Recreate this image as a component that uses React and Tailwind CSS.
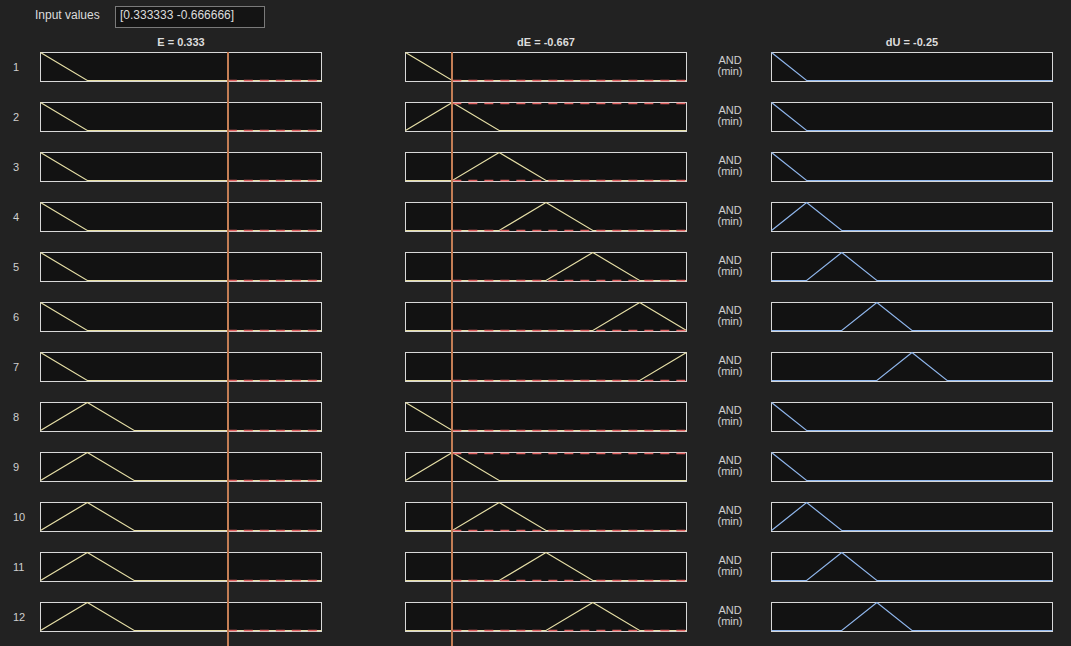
import React from 'react';

const W = 282;
const H = 30;

// x position inside a plot for a value in [-1, 1]
const px = (v) => ((v + 1) / 2) * (W - 1) + 0.5;
const py = (m) => 0.5 + (1 - m) * 28;

function triPoints(c, h) {
  const pts = [];
  const f = (v) => Math.max(0, 1 - Math.abs(v - c) / h);
  const xs = [-1, c - h, c, c + h, 1].filter((v) => v >= -1 && v <= 1);
  xs.sort((a, b) => a - b);
  xs.forEach((v) => pts.push([v, f(v)]));
  return pts;
}

function Plot({ points, color, input }) {
  const poly = points.map(([v, m]) => `${px(v)},${py(m)}`).join(' ');
  let level = null;
  if (input !== undefined) {
    for (let i = 0; i < points.length - 1; i++) {
      const [a, ma] = points[i];
      const [b, mb] = points[i + 1];
      if (input >= a && input <= b) {
        level = b === a ? ma : ma + ((input - a) / (b - a)) * (mb - ma);
        break;
      }
    }
  }
  return (
    <svg width={W} height={H} className="block">
      <rect x="0.5" y="0.5" width={W - 1} height={H - 1} fill="#121212" stroke="#d8d8d8" strokeWidth="1" />
      <polyline points={poly} fill="none" stroke={color} strokeWidth="1.2" />
      {level !== null && (
        <line
          x1={px(input)}
          x2={W - 1}
          y1={level > 0.5 ? 1.5 : 28.5}
          y2={level > 0.5 ? 1.5 : 28.5}
          stroke="#e06060"
          strokeWidth="1.6"
          strokeDasharray="9 7"
        />
      )}
    </svg>
  );
}

const third = 1 / 3;
const eRows = [0, 0, 0, 0, 0, 0, 0, 1, 1, 1, 1, 1];
const dERows = [0, 1, 2, 3, 4, 5, 6, 0, 1, 2, 3, 4];
const dURows = [-1, -1, -1, -0.75, -0.5, -0.25, 0, -1, -1, -0.75, -0.5, -0.25];

const E = 0.333333;
const DE = -0.666666;

function InputColumn({ title, rows, input, lineLeft }) {
  return (
    <div className="w-[282px] flex flex-col">
      <div className="h-4 text-[11px] leading-[12px] font-bold text-[#dcdcdc] text-center">{title}</div>
      <div className="relative flex flex-col">
        {rows.map((k, i) => (
          <div key={i} className="h-[50px]">
            <Plot points={triPoints(-1 + k * third, third)} color="#e6dfa6" input={input} />
          </div>
        ))}
        <div className="absolute top-0 bottom-0 w-[2px] bg-[#c47e55]" style={{ left: lineLeft }} />
      </div>
    </div>
  );
}

export default function App() {
  return (
    <div className="h-[646px] w-[1071px] overflow-hidden bg-[#222222] text-[#d4d4d4]" style={{ fontFamily: '"Liberation Sans", Arial, sans-serif' }}>
      <div className="h-[36px] flex items-start pt-[6px]">
        <div className="ml-[35px] mt-[1px] w-[80px] text-[12px] leading-[16px] text-[#dcdcdc]">Input values</div>
        <div className="w-[150px] h-[22px] border border-[#7a7a7a] bg-[#141414] px-[4px] text-[12px] leading-[16px] text-[#dcdcdc]">
          [0.333333 -0.666666]
        </div>
      </div>

      <div className="flex">
        <div className="w-[40px] flex flex-col pt-4">
          {eRows.map((_, i) => (
            <div key={i} className="h-[50px]">
              <div className="h-[30px] flex items-center pl-[13px] text-[11px] text-[#cfcfcf]">{i + 1}</div>
            </div>
          ))}
        </div>

        <InputColumn title="E = 0.333" rows={eRows} input={E} lineLeft={Math.round(px(E)) - 1} />

        <div className="w-[83px]" />

        <InputColumn title="dE = -0.667" rows={dERows} input={DE} lineLeft={Math.round(px(DE)) - 1} />

        <div className="w-[84px] flex flex-col pt-4">
          {eRows.map((_, i) => (
            <div key={i} className="h-[50px]">
              <div className="h-[30px] flex flex-col items-center justify-center pl-[2px] pb-[2px] text-[11px] leading-[11px] text-[#cfcfcf]">
                <span>AND</span>
                <span>(min)</span>
              </div>
            </div>
          ))}
        </div>

        <div className="w-[282px] flex flex-col">
          <div className="h-4 text-[11px] leading-[12px] font-bold text-[#dcdcdc] text-center">dU = -0.25</div>
          {dURows.map((c, i) => (
            <div key={i} className="h-[50px]">
              <Plot points={triPoints(c, 0.25)} color="#8fb6ec" />
            </div>
          ))}
        </div>
      </div>
    </div>
  );
}
